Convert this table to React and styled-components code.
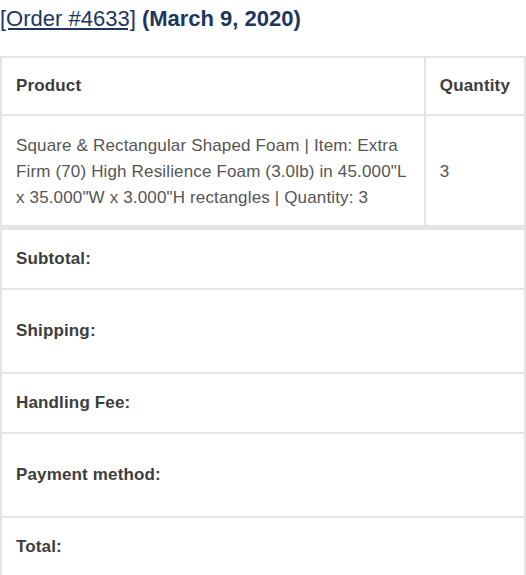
import styled, { createGlobalStyle } from "styled-components";

const GlobalStyle = createGlobalStyle`
  html, body {
    margin: 0;
    padding: 0;
    background: #fff;
  }

  body {
    font-family: "Liberation Sans", Arial, Helvetica, sans-serif;
    color: #555;
  }
`;

const Wrapper = styled.div`
  width: 526px;
`;

const Heading = styled.h2`
  margin: 6px 0 24px;
  font-size: 22px;
  line-height: 26px;
  font-weight: 700;
  color: #1c3660;

  .link {
    color: #1c3660;
    font-weight: 400;
    text-decoration: underline;
  }
`;

const Table = styled.table`
  width: 100%;
  border: 1px solid #e5e5e5;
  border-collapse: separate;
  border-spacing: 0;
  font-size: 17px;
  line-height: 26px;
`;

const Th = styled.th`
  border: 1px solid #e5e5e5;
  border-top-width: ${(p) => (p.$first ? "4px" : "1px")};
  padding: ${(p) => (p.$foot ? (p.$tall ? "28px 14px" : "16px 14px") : "15px 14px")};
  text-align: left;
  vertical-align: middle;
  font-weight: 700;
  letter-spacing: 0.15px;
  color: #3d3d3d;
`;

const Td = styled.td`
  border: 1px solid #e5e5e5;
  padding: 17px 14px 14px;
  text-align: left;
  vertical-align: middle;
  letter-spacing: 0.15px;
  color: #555;
  white-space: ${(p) => (p.$nowrap ? "nowrap" : "normal")};
`;

const totals = [
  { label: "Subtotal:" },
  { label: "Shipping:", tall: true },
  { label: "Handling Fee:" },
  { label: "Payment method:", tall: true },
  { label: "Total:" },
];

export default function App() {
  return (
    <>
      <GlobalStyle />
      <Wrapper>
        <Heading>
          <a className="link" href="#">
            [Order #4633]
          </a>{" "}
          (March 9, 2020)
        </Heading>
        <Table>
          <thead>
            <tr>
              <Th>Product</Th>
              <Th>Quantity</Th>
            </tr>
          </thead>
          <tbody>
            <tr>
              <Td>
                Square &amp; Rectangular Shaped Foam | Item: Extra Firm (70)
                High Resilience Foam (3.0lb) in 45.000"L x 35.000"W x
                3.000"H rectangles | Quantity: 3
              </Td>
              <Td $nowrap>3</Td>
            </tr>
          </tbody>
          <tfoot>
            {totals.map((row, i) => (
              <tr key={row.label}>
                <Th colSpan={2} $foot $first={i === 0} $tall={row.tall}>
                  {row.label}
                </Th>
              </tr>
            ))}
          </tfoot>
        </Table>
      </Wrapper>
    </>
  );
}
